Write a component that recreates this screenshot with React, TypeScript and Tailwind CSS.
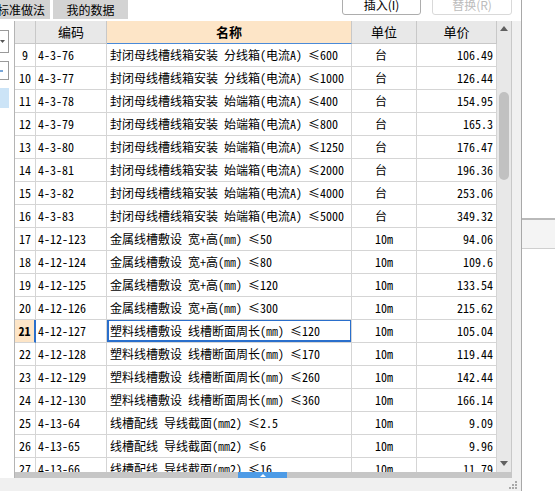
import React from "react";

type Row = [string, string, string, string, string];

const rows: Row[] = [
  ["9", "4-3-76", "封闭母线槽线箱安装 分线箱(电流A) ≤600", "台", "106.49"],
  ["10", "4-3-77", "封闭母线槽线箱安装 分线箱(电流A) ≤1000", "台", "126.44"],
  ["11", "4-3-78", "封闭母线槽线箱安装 始端箱(电流A) ≤400", "台", "154.95"],
  ["12", "4-3-79", "封闭母线槽线箱安装 始端箱(电流A) ≤800", "台", "165.3"],
  ["13", "4-3-80", "封闭母线槽线箱安装 始端箱(电流A) ≤1250", "台", "176.47"],
  ["14", "4-3-81", "封闭母线槽线箱安装 始端箱(电流A) ≤2000", "台", "196.36"],
  ["15", "4-3-82", "封闭母线槽线箱安装 始端箱(电流A) ≤4000", "台", "253.06"],
  ["16", "4-3-83", "封闭母线槽线箱安装 始端箱(电流A) ≤5000", "台", "349.32"],
  ["17", "4-12-123", "金属线槽敷设 宽+高(㎜) ≤50", "10m", "94.06"],
  ["18", "4-12-124", "金属线槽敷设 宽+高(㎜) ≤80", "10m", "109.6"],
  ["19", "4-12-125", "金属线槽敷设 宽+高(㎜) ≤120", "10m", "133.54"],
  ["20", "4-12-126", "金属线槽敷设 宽+高(㎜) ≤300", "10m", "215.62"],
  ["21", "4-12-127", "塑料线槽敷设 线槽断面周长(㎜) ≤120", "10m", "105.04"],
  ["22", "4-12-128", "塑料线槽敷设 线槽断面周长(㎜) ≤170", "10m", "119.44"],
  ["23", "4-12-129", "塑料线槽敷设 线槽断面周长(㎜) ≤260", "10m", "142.44"],
  ["24", "4-12-130", "塑料线槽敷设 线槽断面周长(㎜) ≤360", "10m", "166.14"],
  ["25", "4-13-64", "线槽配线 导线截面(㎜2) ≤2.5", "10m", "9.09"],
  ["26", "4-13-65", "线槽配线 导线截面(㎜2) ≤6", "10m", "9.96"],
  ["27", "4-13-66", "线槽配线 导线截面(㎜2) ≤16", "10m", "11.79"],
];

const SELECTED = "21";

function Grip() {
  const dots = [
    [6, 0],
    [6, 3],
    [3, 3],
    [6, 6],
    [3, 6],
    [0, 6],
  ];
  return (
    <svg width="8" height="8" viewBox="0 0 8 8">
      {dots.map(([x, y]) => (
        <rect key={`${x}-${y}`} x={x} y={y} width="2" height="2" fill="#a8a8a8" />
      ))}
    </svg>
  );
}

function VScroll() {
  return (
    <div className="w-[15px] h-full bg-[#e8e8e8] border-r border-[#c8c8c8] flex flex-col items-center">
      <svg width="8" height="5" viewBox="0 0 8 5" className="mt-[5px]">
        <path d="M0 5 L4 0 L8 5 Z" fill="#606060" />
      </svg>
      <div className="mt-[61px] w-[10px] h-[88px] rounded-full bg-[#c1c1c1]" />
      <div className="flex-1" />
      <svg width="8" height="5" viewBox="0 0 8 5" className="mb-[6px]">
        <path d="M0 0 L8 0 L4 5 Z" fill="#606060" />
      </svg>
    </div>
  );
}

export default function App() {
  const cell = "h-[23px] border-r border-b border-[#d5d5d5] flex items-center overflow-hidden whitespace-nowrap";
  const head = "h-[23px] border-r border-b border-[#c8c8c8] bg-[#e8e8e8] flex items-center justify-center text-[13px] font-['Noto_Sans_CJK_SC',sans-serif]";

  return (
    <div className="w-[555px] h-[491px] overflow-hidden bg-white flex text-black font-['Noto_Sans_Mono_CJK_SC','Noto_Sans_CJK_SC',sans-serif] text-[12px]">
      {/* main */}
      <div className="w-[521px] h-full flex flex-col">
        {/* tabs and buttons */}
        <div className="h-[21px] flex items-start font-['Noto_Sans_CJK_SC',sans-serif]">
          <div className="w-[50px] h-[19px] bg-[#d3d3d3] flex items-center justify-end pr-[5px] overflow-hidden whitespace-nowrap">
            标准做法
          </div>
          <div className="ml-[3px] w-[75px] h-[19px] bg-[#d3d3d3] flex items-center justify-center">我的数据</div>
          <div className="ml-[214px] mt-[-7px] w-[79px] h-[22px] bg-white border border-[#adadad] rounded-[3px] flex items-center justify-center pt-[2px]">
            插入(I)
          </div>
          <div className="ml-[11px] mt-[-7px] w-[80px] h-[22px] bg-white border border-[#d9d9d9] rounded-[3px] flex items-center justify-center pt-[2px] text-[#bcbcbc]">
            替换(R)
          </div>
        </div>

        <div className="flex flex-1">
          {/* left side panel */}
          <div className="w-[14px] bg-white flex flex-col">
            <div className="mt-[9px] w-[9px] h-[23px] border border-l-0 border-[#9a9a9a] flex items-center">
              <svg width="5" height="4" viewBox="0 0 5 4">
                <path d="M0 0 L5 0 L2.5 3 Z" fill="#555" />
              </svg>
            </div>
            <div className="mt-[8px] w-[9px] h-[19px] border border-l-0 border-[#9a9a9a] flex items-center">
              <div className="w-[3px] h-[2px] bg-[#7aa7d8]" />
            </div>
            <div className="mt-[8px] w-[9px] h-[20px] bg-[#cce4f7]" />
          </div>

          {/* table frame */}
          <div className="w-[498px] border-l border-[#b4b4b4] flex flex-col">
            <div className="h-[451px] flex overflow-hidden">
              <div className="w-[482px] flex flex-col">
                <div className="flex">
                  <div className={`${head} w-[21px]`} />
                  <div className={`${head} w-[71px]`}>编码</div>
                  <div className={`${head} w-[245px] bg-[#fde5c7] border-b-[#4a8ad8] font-bold`}>名称</div>
                  <div className={`${head} w-[65px]`}>单位</div>
                  <div className={`${head} w-[80px]`}>单价</div>
                </div>
                {rows.map(([n, code, name, unit, price]) => {
                  const sel = n === SELECTED;
                  return (
                    <div key={n} className="flex shrink-0">
                      <div
                        className={`${cell} w-[21px] justify-center ${
                          sel ? "bg-[#fde5c7] font-bold border-r-2 border-r-[#2a6fcc]" : ""
                        }`}
                      >
                        {n}
                      </div>
                      <div className={`${cell} w-[71px] pl-[2px]`}>{code}</div>
                      <div className={`${cell} w-[245px] pl-[3px] relative`}>
                        {name}
                        {sel && <div className="absolute left-0 top-[-1px] right-[-1px] bottom-0 border-2 border-[#2a6fcc]" />}
                      </div>
                      <div className={`${cell} w-[65px] pl-[23px]`}>{unit}</div>
                      <div className={`${cell} w-[80px] justify-end pr-[3px]`}>{price}</div>
                    </div>
                  );
                })}
              </div>
              <VScroll />
            </div>
            {/* horizontal scroller */}
            <div className="h-[6px] bg-[#c6c6c6] flex">
              <div className="ml-[223px] w-[49px] h-full bg-[#4d9be6] flex items-center justify-center">
                <svg width="6" height="3" viewBox="0 0 6 3">
                  <path d="M0 3 L3 0 L6 3 Z" fill="#ffffff" />
                </svg>
              </div>
            </div>
          </div>

          <div className="w-[9px] bg-[#f0f0f0]" />
        </div>

        {/* status strip */}
        <div className="h-[13px] bg-[#f0f0f0] flex items-center">
          <div className="ml-[509px]">
            <Grip />
          </div>
        </div>
      </div>

      {/* divider */}
      <div className="w-px h-full bg-[#a8a8a8]" />

      {/* right panel */}
      <div className="flex-1 flex flex-col">
        <div className="h-[218px]" />
        <div className="h-[2px] bg-[#b9b9b9]" />
        <div className="h-[29px] bg-[#f4f4f4] border-b border-[#cfcfcf]" />
      </div>
    </div>
  );
}
